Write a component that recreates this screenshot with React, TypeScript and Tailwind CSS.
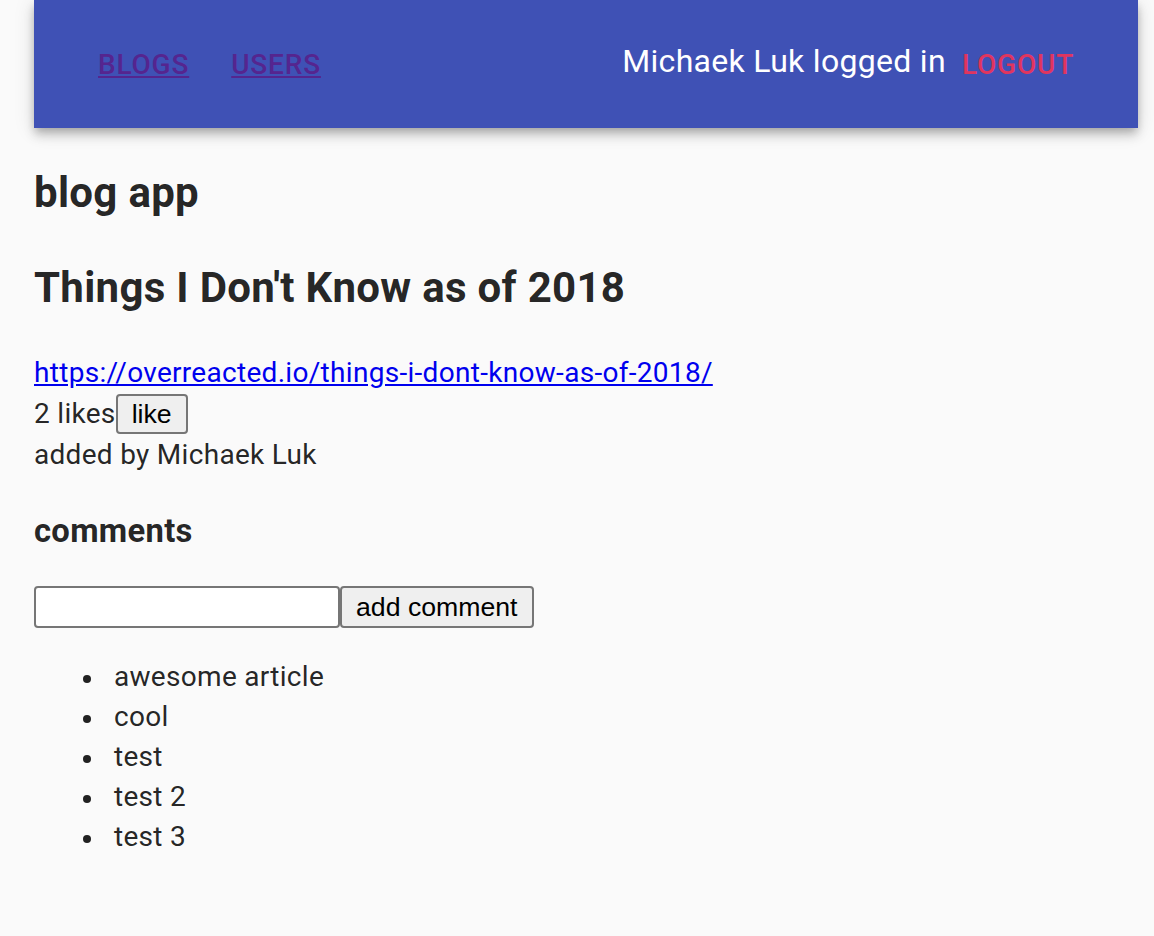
const comments = ["awesome article", "cool", "test", "test 2", "test 3"];

function NavBar() {
  return (
    <header className="flex h-[128px] w-full items-center bg-[#3f51b5] px-[48px] shadow-[0px_4px_8px_-2px_rgba(0,0,0,0.2),0px_8px_10px_0px_rgba(0,0,0,0.14),0px_2px_20px_0px_rgba(0,0,0,0.12)]">
      <a
        href="#"
        className="mt-[2px] px-[16px] py-[12px] text-[28px] font-medium uppercase tracking-[0.02857em] text-[#55258f] underline"
      >
        blogs
      </a>
      <a
        href="#"
        className="mt-[2px] ml-[10px] px-[16px] py-[12px] text-[28px] font-medium uppercase tracking-[0.02857em] text-[#55258f] underline"
      >
        users
      </a>
      <div className="ml-auto flex h-full items-center">
        <span className="mb-[7px] text-[32px] leading-[1.5] tracking-[0.00938em] text-white">
          Michaek Luk logged in
        </span>
        <button className="mt-[2px] px-[16px] py-[12px] text-[28px] font-medium uppercase tracking-[0.02857em] text-[#e0355f]">
          logout
        </button>
      </div>
    </header>
  );
}

export default function App() {
  return (
    <div className="min-h-screen bg-[#fafafa] pl-[34px] pr-[16px] font-['Roboto',sans-serif] text-[28px] leading-[40px] tracking-[0.01071em] text-[rgba(0,0,0,0.87)]">
      <NavBar />
      <h2 className="my-[35px] text-[42px] font-bold leading-[60px]">blog app</h2>
      <div>
        <h2 className="my-[35px] text-[42px] font-bold leading-[60px]">
          Things I Don't Know as of 2018
        </h2>
        <div>
          <a href="#" className="text-[#0000ee] underline">
            https://overreacted.io/things-i-dont-know-as-of-2018/
          </a>
        </div>
        <div className="flex h-[42px] items-center">
          2 likes
          <button className="h-[40px] rounded-[4px] border-2 border-[#767676] bg-[#efefef] px-[14px] font-['Liberation_Sans',Arial,sans-serif] text-[26.67px] leading-[34px] tracking-normal text-black">
            like
          </button>
        </div>
        <div>added by Michaek Luk</div>
        <h3 className="mt-[33px] mb-[31px] text-[32.76px] font-bold leading-[47px]">comments</h3>
        <form className="flex" onSubmit={(e) => e.preventDefault()}>
          <input className="h-[42px] w-[306px] rounded-[4px] border-2 border-[#767676] bg-white px-[4px] font-['Liberation_Sans',Arial,sans-serif] text-[26.67px] text-black" />
          <button
            type="submit"
            className="h-[42px] rounded-[4px] border-2 border-[#767676] bg-[#efefef] px-[14px] font-['Liberation_Sans',Arial,sans-serif] text-[26.67px] leading-[34px] tracking-normal text-black"
          >
            add comment
          </button>
        </form>
        <ul className="mt-[29px] mb-[28px] list-none pl-[80px]">
          {comments.map((c) => (
            <li key={c} className="flex items-center">
              <span className="mt-[3px] ml-[-31px] mr-[23px] h-[8px] w-[8px] rounded-full bg-[#212121]" />
              {c}
            </li>
          ))}
        </ul>
      </div>
    </div>
  );
}
